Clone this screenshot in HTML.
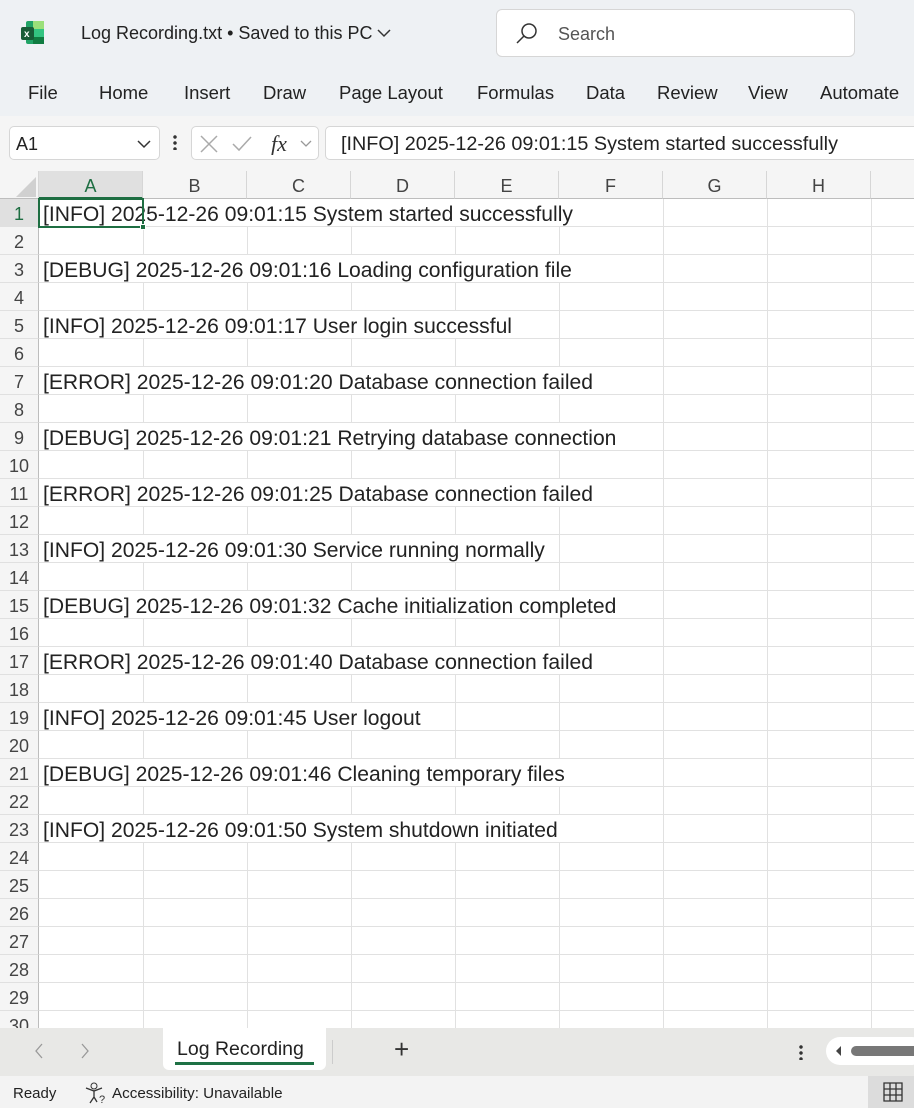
<!DOCTYPE html>
<html><head><style>
*{margin:0;padding:0;box-sizing:border-box}
body{width:914px;height:1108px;overflow:hidden;background:#fff;font-family:"Liberation Sans",sans-serif;position:relative;color:#222}
.abs{position:absolute}
#top{left:0;top:0;width:914px;height:116px;background:#eef1f4}
#fbar{left:0;top:116px;width:914px;height:55px;background:#f5f5f5}
.tab{top:82px;font-size:18.5px;color:#222}
.box{background:#fff;border:1px solid #d6d6d6;border-radius:5px}
#grid{left:0;top:171px;width:914px;height:857px;overflow:hidden}
.ch{position:absolute;top:0;height:28px;border-right:1px solid #d6d6d6;border-bottom:1px solid #bdbdbd;background:#f5f5f5;font-size:18px;text-align:center;line-height:30px;color:#444}
.rh{position:absolute;left:0;width:39px;height:28px;border-right:1px solid #bdbdbd;border-bottom:1px solid #e0e0e0;background:#f5f5f5;font-size:18px;text-align:center;line-height:30px;color:#444}
.vl{position:absolute;top:28px;width:1px;height:830px;background:#e1e1e1}
.hl{position:absolute;left:39px;width:875px;height:1px;background:#e1e1e1}
.txt{position:absolute;left:40px;padding:2px 3px 0 3px;height:27px;font-size:21.1px;line-height:28px;color:#222;white-space:nowrap;background:#fff}
</style></head><body>
<div id="top" class="abs"></div>
<svg class="abs" style="left:21px;top:20px" width="24" height="26" viewBox="0 0 24 26"><rect x="5" y="1" width="18" height="23" rx="2" fill="#21a366"/><rect x="12" y="1" width="11" height="8" fill="#9be07a"/><rect x="12" y="9" width="11" height="8" fill="#33c481"/><rect x="12" y="17" width="11" height="7" fill="#107c41"/><rect x="0" y="7" width="13" height="13" rx="2" fill="#185c37"/><text x="3" y="17" font-size="10" font-weight="bold" fill="#fff" font-family="Liberation Sans">x</text></svg>
<div class="abs" style="left:81px;top:23px;font-size:18px;color:#222">Log Recording.txt • Saved to this PC</div>
<svg class="abs" style="left:376px;top:28px" width="16" height="10"><path d="M2 2l6 6 6-6" stroke="#333" stroke-width="1.5" fill="none"/></svg>
<div class="abs box" style="left:496px;top:9px;width:359px;height:48px;border-radius:6px"></div>
<svg class="abs" style="left:515px;top:22px" width="24" height="24"><circle cx="14" cy="9" r="7" stroke="#333" stroke-width="1.5" fill="none"/><path d="M9 14L2 21" stroke="#333" stroke-width="1.5"/></svg>
<div class="abs" style="left:558px;top:24px;font-size:18px;color:#555">Search</div>
<div class="abs tab" style="left:28px">File</div>
<div class="abs tab" style="left:99px">Home</div>
<div class="abs tab" style="left:184px">Insert</div>
<div class="abs tab" style="left:263px">Draw</div>
<div class="abs tab" style="left:339px">Page Layout</div>
<div class="abs tab" style="left:477px">Formulas</div>
<div class="abs tab" style="left:586px">Data</div>
<div class="abs tab" style="left:657px">Review</div>
<div class="abs tab" style="left:748px">View</div>
<div class="abs tab" style="left:820px">Automate</div>
<div id="fbar" class="abs"></div>
<div class="abs box" style="left:9px;top:126px;width:151px;height:34px"></div>
<div class="abs" style="left:16px;top:134px;font-size:18px">A1</div>
<svg class="abs" style="left:136px;top:139px" width="16" height="10"><path d="M2 2l6 6 6-6" stroke="#333" stroke-width="1.5" fill="none"/></svg>
<div class="abs" style="left:173px;top:134px;width:4px;height:16px;background:radial-gradient(circle,#333 1.5px,transparent 2px) 0 0/4px 6px repeat-y"></div>
<div class="abs box" style="left:191px;top:126px;width:128px;height:34px"></div>
<svg class="abs" style="left:198px;top:133px" width="120" height="22"><path d="M3 3l16 16M19 3L3 19" stroke="#aaa" stroke-width="1.5"/><path d="M35 11l6 6 12-13" stroke="#aaa" stroke-width="1.5" fill="none"/><text x="73" y="18" font-size="22" font-style="italic" font-family="Liberation Serif" fill="#333">fx</text><path d="M103 8l5 5 5-5" stroke="#999" stroke-width="1.3" fill="none"/></svg>
<div class="abs box" style="left:325px;top:126px;width:600px;height:34px"></div>
<div class="abs" style="left:341px;top:133px;font-size:19.8px">[INFO] 2025-12-26 09:01:15 System started successfully</div>
<div id="grid" class="abs">
<div class="ch" style="left:0;width:39px"></div>
<svg style="position:absolute;left:16px;top:6px" width="20" height="20"><path d="M20 0V20H0Z" fill="#d0d0d0"/></svg>
<div class="ch" style="left:39px;width:104px;background:#e0e0e0;color:#1e6e42;border-bottom:2px solid #1e6e42">A</div>
<div class="ch" style="left:143px;width:104px">B</div>
<div class="ch" style="left:247px;width:104px">C</div>
<div class="ch" style="left:351px;width:104px">D</div>
<div class="ch" style="left:455px;width:104px">E</div>
<div class="ch" style="left:559px;width:104px">F</div>
<div class="ch" style="left:663px;width:104px">G</div>
<div class="ch" style="left:767px;width:104px">H</div>
<div class="ch" style="left:871px;width:104px"></div>
<div class="vl" style="left:143px"></div><div class="vl" style="left:247px"></div><div class="vl" style="left:351px"></div><div class="vl" style="left:455px"></div><div class="vl" style="left:559px"></div><div class="vl" style="left:663px"></div><div class="vl" style="left:767px"></div><div class="vl" style="left:871px"></div>
<div id="rows"></div>
<div class="txt" style="top:28px">[INFO] 2025-12-26 09:01:15 System started successfully</div>
<div class="txt" style="top:84px">[DEBUG] 2025-12-26 09:01:16 Loading configuration file</div>
<div class="txt" style="top:140px">[INFO] 2025-12-26 09:01:17 User login successful</div>
<div class="txt" style="top:196px">[ERROR] 2025-12-26 09:01:20 Database connection failed</div>
<div class="txt" style="top:252px">[DEBUG] 2025-12-26 09:01:21 Retrying database connection</div>
<div class="txt" style="top:308px">[ERROR] 2025-12-26 09:01:25 Database connection failed</div>
<div class="txt" style="top:364px">[INFO] 2025-12-26 09:01:30 Service running normally</div>
<div class="txt" style="top:420px">[DEBUG] 2025-12-26 09:01:32 Cache initialization completed</div>
<div class="txt" style="top:476px">[ERROR] 2025-12-26 09:01:40 Database connection failed</div>
<div class="txt" style="top:532px">[INFO] 2025-12-26 09:01:45 User logout</div>
<div class="txt" style="top:588px">[DEBUG] 2025-12-26 09:01:46 Cleaning temporary files</div>
<div class="txt" style="top:644px">[INFO] 2025-12-26 09:01:50 System shutdown initiated</div>
<div style="position:absolute;left:38px;top:27px;width:106px;height:30px;border:2px solid #1e6e42"></div>
<div style="position:absolute;left:140px;top:53px;width:6px;height:6px;background:#1e6e42;border:1px solid #fff"></div>
</div>
<script>
var r=document.getElementById('rows'),h='';
for(var i=1;i<=30;i++){var t=28*i;h+='<div class="rh" style="top:'+t+'px'+(i==1?';color:#1e6e42;background:#e0e0e0':'')+'">'+i+'</div><div class="hl" style="top:'+(t+27)+'px"></div>';}
r.innerHTML=h;
</script>
<div class="abs" style="left:0;top:1028px;width:914px;height:48px;background:#e8e8e6"></div>
<svg class="abs" style="left:30px;top:1041px" width="70" height="20"><path d="M12 3L6 10l6 7" stroke="#999" stroke-width="1.3" fill="none"/><path d="M52 3l6 7-6 7" stroke="#999" stroke-width="1.3" fill="none"/></svg>
<div class="abs" style="left:163px;top:1028px;width:163px;height:42px;background:#fff;border-radius:0 0 6px 6px"></div>
<div class="abs" style="left:177px;top:1038px;font-size:19.5px">Log Recording</div>
<div class="abs" style="left:175px;top:1062px;width:139px;height:3px;background:#1e7145"></div>
<div class="abs" style="left:332px;top:1040px;width:1px;height:24px;background:#ccc"></div>
<div class="abs" style="left:394px;top:1034px;font-size:26px;color:#333">+</div>
<div class="abs" style="left:799px;top:1044px;width:4px;height:16px;background:radial-gradient(circle,#333 1.5px,transparent 2px) 0 0/4px 6px repeat-y"></div>
<div class="abs" style="left:826px;top:1037px;width:100px;height:28px;background:#fff;border-radius:14px"></div>
<svg class="abs" style="left:833px;top:1044px" width="81" height="14"><path d="M8 2L3 7l5 5z" fill="#444"/><rect x="18" y="2" width="70" height="10" rx="5" fill="#777"/></svg>
<div class="abs" style="left:0;top:1076px;width:914px;height:32px;background:#f3f3f3"></div>
<div class="abs" style="left:13px;top:1085px;font-size:15px">Ready</div>
<svg class="abs" style="left:84px;top:1082px" width="24" height="22"><circle cx="10" cy="4" r="3" stroke="#333" fill="none"/><path d="M2 6l8 3 8-3M10 9v6l-4 6M10 15l3 5" stroke="#333" stroke-width="1.3" fill="none"/><text x="15" y="21" font-size="11" fill="#333">?</text></svg>
<div class="abs" style="left:112px;top:1085px;font-size:15.2px">Accessibility: Unavailable</div>
<div class="abs" style="left:868px;top:1076px;width:46px;height:32px;background:#dcdcdc"></div>
<svg class="abs" style="left:883px;top:1082px" width="20" height="20"><path d="M1 1h18v18H1zM1 7h18M1 13h18M7 1v18M13 1v18" stroke="#333" stroke-width="1.3" fill="none"/></svg>
</body></html>
